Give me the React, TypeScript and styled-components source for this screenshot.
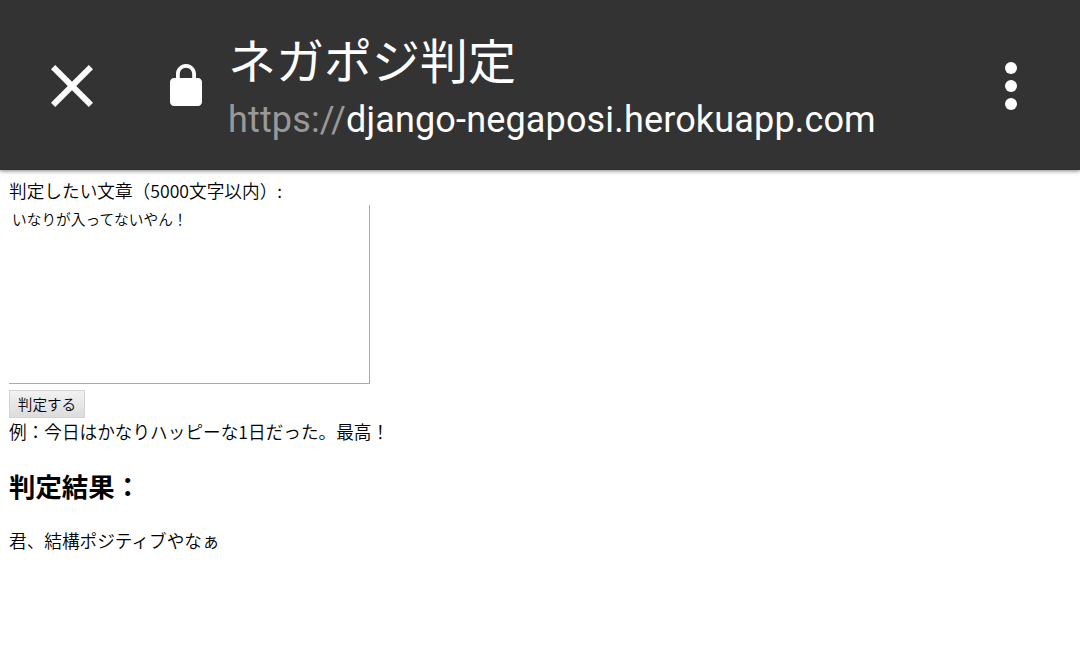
import React from "react";

import styled, { createGlobalStyle } from "styled-components";

const GlobalStyle = createGlobalStyle`
  body {
    margin: 0;
    background: #fff;
    color: #000;
    font-family: "Noto Sans CJK JP", sans-serif;
    font-weight: 350;
  }
`;

const Toolbar = styled.header`
  box-sizing: border-box;
  height: 170px;
  display: flex;
  align-items: flex-start;
  background: #333;
  color: #fff;
  box-shadow: 0 1px 4px rgba(0, 0, 0, 0.5);
`;

const Icon = styled.svg<{ $left: number; $top: number }>`
  flex: none;
  display: block;
  margin: ${(p) => p.$top}px 0 0 ${(p) => p.$left}px;
  fill: #fff;
`;

const Heading = styled.div`
  width: 752px;
  margin-left: 26px;
  padding-top: 28px;
  white-space: nowrap;
`;

const Title = styled.div`
  font: 48px/70px Roboto, "Noto Sans CJK JP", sans-serif;
`;

const Url = styled.div`
  font: 36px/44px Roboto, sans-serif;
  letter-spacing: 0.16px;
`;

const Scheme = styled.span`
  color: #999;
`;

const Form = styled.form`
  padding: 8px 9px 0;
`;

const Label = styled.label`
  display: block;
  height: 27px;
  font-size: 17.67px;
  line-height: 26px;
`;

const TextArea = styled.textarea`
  box-sizing: border-box;
  display: block;
  width: 361px;
  height: 179px;
  padding: 3px;
  border: 0 solid #a9a9a9;
  border-width: 0 1px 1px 0;
  outline: none;
  resize: none;
  font: 350 14.7px/21px "Noto Sans CJK JP", sans-serif;
`;

const Submit = styled.button`
  box-sizing: border-box;
  display: block;
  width: 76px;
  height: 28px;
  margin-top: 6px;
  padding: 0;
  border: 1px solid #d4d4d4;
  background: linear-gradient(#f2f2f2, #dcdcdc);
  color: #000;
  font: 350 14.6px/24px "Noto Sans CJK JP", sans-serif;
`;

const Text = styled.p`
  margin: 0 9px;
  font-size: 17.65px;
  line-height: 27px;
`;

const Result = styled.h2`
  margin: 22px 9px;
  font-size: 26.4px;
  line-height: 38px;
`;

const App: React.FC = () => {
  return (
    <>
      <GlobalStyle />
      <Toolbar>
        <Icon $left={51} $top={65} width="42" height="42" viewBox="5 5 14 14">
          <path d="M19 6.41L17.59 5 12 10.59 6.41 5 5 6.41 10.59 12 5 17.59 6.41 19 12 13.41 17.59 19 19 17.59 13.41 12z" />
        </Icon>
        <Icon $left={77} $top={64} width="32" height="42" viewBox="4 1 16 21">
          <path d="M18 8h-1V6c0-2.76-2.24-5-5-5S7 3.24 7 6v2H6c-1.1 0-2 .9-2 2v10c0 1.1.9 2 2 2h12c1.1 0 2-.9 2-2V10c0-1.1-.9-2-2-2zM8.9 8V6c0-1.71 1.39-3.1 3.1-3.1s3.1 1.39 3.1 3.1v2H8.9z" />
        </Icon>
        <Heading>
          <Title>ネガポジ判定</Title>
          <Url>
            <Scheme>https://</Scheme>django-negaposi.herokuapp.com
          </Url>
        </Heading>
        <Icon $left={25} $top={62} width="12" height="48" viewBox="0 0 12 48">
          <circle cx="6" cy="6" r="6" />
          <circle cx="6" cy="24" r="6" />
          <circle cx="6" cy="42" r="6" />
        </Icon>
      </Toolbar>
      <Form>
        <Label htmlFor="sentence">判定したい文章（5000文字以内）:</Label>
        <TextArea id="sentence" defaultValue="いなりが入ってないやん！" />
        <Submit type="button">判定する</Submit>
      </Form>
      <Text>例：今日はかなりハッピーな1日だった。最高！</Text>
      <Result>判定結果：</Result>
      <Text>君、結構ポジティブやなぁ</Text>
    </>
  );
};
export default App;
